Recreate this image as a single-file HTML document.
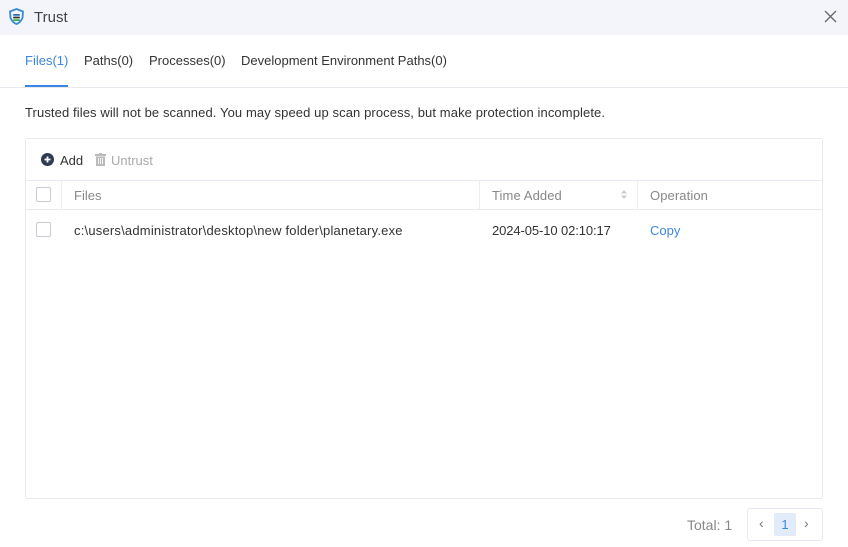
<!DOCTYPE html>
<html><head><style>
*{margin:0;padding:0;box-sizing:border-box}
body{width:848px;height:547px;background:#fff;font-family:"Liberation Sans",sans-serif;position:relative;overflow:hidden;color:#333}
.abs{position:absolute;white-space:nowrap}
.hdr{position:absolute;left:0;top:0;width:848px;height:35px;background:#f3f5fa}
.cb{position:absolute;width:15px;height:15px;border:1px solid #c8cbd2;border-radius:2px;background:#fff}
</style></head><body>
<div class="hdr"></div>
<svg class="abs" style="left:8px;top:8px" width="17" height="17" viewBox="0 0 17 17">
<path d="M8.5 1 L15 3.5 L14.5 10 Q12.5 14.5 8.5 16 Q4.5 14.5 2.5 10 L2 3.5 Z" fill="none" stroke="#3a8bd6" stroke-width="1.8"/>
<rect x="5" y="6" width="7" height="1.8" rx="0.9" fill="#2a6fb5"/>
<rect x="5" y="8.6" width="7" height="1.8" rx="0.9" fill="#333"/>
<rect x="5" y="11.2" width="7" height="1.8" rx="0.9" fill="#3fae4a"/>
</svg>
<div class="abs" style="left:34px;top:9px;font-size:15px;color:#444">Trust</div>
<svg class="abs" style="left:824px;top:10px" width="13" height="13" viewBox="0 0 13 13"><path d="M1 1L12 12M12 1L1 12" stroke="#666" stroke-width="1.3"/></svg>

<div class="abs" style="left:25px;top:53px;font-size:13px;color:#3b86e0">Files(1)</div>
<div class="abs" style="left:25px;top:85px;width:43px;height:2px;background:#3b86e0"></div>
<div class="abs" style="left:84px;top:53px;font-size:13px;color:#333">Paths(0)</div>
<div class="abs" style="left:149px;top:53px;font-size:13px;color:#333">Processes(0)</div>
<div class="abs" style="left:241px;top:53px;font-size:13px;color:#333">Development Environment Paths(0)</div>
<div class="abs" style="left:0;top:87px;width:848px;height:1px;background:#e8eaf0"></div>

<div class="abs" style="left:25px;top:105px;font-size:13px;color:#333;letter-spacing:0.1px">Trusted files will not be scanned. You may speed up scan process, but make protection incomplete.</div>

<div class="abs" style="left:25px;top:138px;width:798px;height:361px;border:1px solid #e6e9f0;border-radius:3px"></div>
<svg class="abs" style="left:41px;top:153px" width="13" height="13" viewBox="0 0 13 13"><circle cx="6.5" cy="6.5" r="6.5" fill="#2e3b52"/><path d="M6.5 3.5v6M3.5 6.5h6" stroke="#fff" stroke-width="1.8"/></svg>
<div class="abs" style="left:60px;top:153px;font-size:13px;color:#333">Add</div>
<svg class="abs" style="left:95px;top:153px" width="11" height="13" viewBox="0 0 11 13"><rect x="0" y="1" width="11" height="2" fill="#bbb"/><rect x="4" y="0" width="3" height="1.5" fill="#bbb"/><rect x="1" y="3.5" width="9" height="9.5" fill="#bbb"/><path d="M3.5 5v6M5.5 5v6M7.5 5v6" stroke="#fff" stroke-width="0.8"/></svg>
<div class="abs" style="left:111px;top:153px;font-size:13px;color:#aaa">Untrust</div>

<div class="abs" style="left:26px;top:180px;width:796px;height:1px;background:#e8eaf2"></div>
<div class="abs" style="left:26px;top:209px;width:796px;height:1px;background:#e8eaf2"></div>
<div class="abs" style="left:61px;top:181px;width:1px;height:28px;background:#eceef4"></div>
<div class="abs" style="left:479px;top:181px;width:1px;height:28px;background:#eceef4"></div>
<div class="abs" style="left:637px;top:181px;width:1px;height:28px;background:#eceef4"></div>
<div class="cb" style="left:36px;top:187px"></div>
<div class="abs" style="left:74px;top:188px;font-size:13px;color:#888">Files</div>
<div class="abs" style="left:492px;top:188px;font-size:13px;color:#888;letter-spacing:0.1px">Time Added</div>
<svg class="abs" style="left:620px;top:189px" width="8" height="11" viewBox="0 0 8 11"><path d="M4 1L7 4.5H1Z M4 10L7 6.5H1Z" fill="#ccc"/></svg>
<div class="abs" style="left:650px;top:188px;font-size:13px;color:#888;letter-spacing:0.1px">Operation</div>

<div class="cb" style="left:36px;top:222px"></div>
<div class="abs" style="left:74px;top:223px;font-size:13px;color:#333;letter-spacing:0.2px">c:\users\administrator\desktop\new folder\planetary.exe</div>
<div class="abs" style="left:492px;top:223px;font-size:13px;color:#333;letter-spacing:-0.1px">2024-05-10 02:10:17</div>
<div class="abs" style="left:650px;top:223px;font-size:13px;color:#3b86e0">Copy</div>

<div class="abs" style="left:687px;top:517px;font-size:14px;color:#888">Total: 1</div>
<div class="abs" style="left:747px;top:508px;width:76px;height:33px;border:1px solid #e6e9f0;border-radius:3px"></div>
<div class="abs" style="left:759px;top:515px;font-size:14px;color:#777">‹</div>
<div class="abs" style="left:774px;top:513px;width:22px;height:23px;background:#e2ebfa;border-radius:2px;font-size:13px;color:#3b86e0;text-align:center;line-height:23px">1</div>
<div class="abs" style="left:804px;top:515px;font-size:14px;color:#777">›</div>
</body></html>
